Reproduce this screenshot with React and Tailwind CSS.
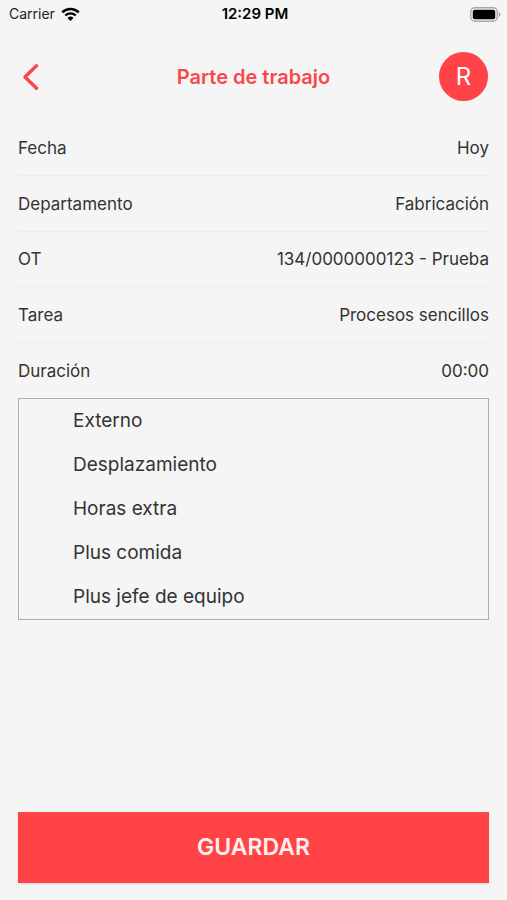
import { useState } from "react";

const fields = [
  { label: "Fecha", value: "Hoy" },
  { label: "Departamento", value: "Fabricación" },
  { label: "OT", value: "134/0000000123 - Prueba" },
  { label: "Tarea", value: "Procesos sencillos" },
  { label: "Duración", value: "00:00" },
];

const extras = [
  "Externo",
  "Desplazamiento",
  "Horas extra",
  "Plus comida",
  "Plus jefe de equipo",
];

const StatusBar = () => (
  <div className="grid h-7 grid-cols-3 items-center pl-[9px] pr-1.5 text-[#222222]">
    <div className="flex items-center gap-1.5">
      <span className="text-sm">Carrier</span>
      <svg width="19" height="15" viewBox="0 0 19 15" fill="none" aria-hidden="true">
        <path d="M1.3 5.3a11.6 11.6 0 0 1 16.4 0" stroke="#000" strokeWidth="2.5" />
        <path d="M4.3 8.5a7.4 7.4 0 0 1 10.4 0" stroke="#000" strokeWidth="2.3" />
        <path d="M9.5 14 6.5 11a4.3 4.3 0 0 1 6 0Z" fill="#000" />
      </svg>
    </div>
    <span className="text-center text-[15px] font-semibold text-black">
      12:29 PM
    </span>
    <svg
      className="justify-self-end"
      width="31"
      height="15"
      viewBox="0 0 31 15"
      fill="none"
      aria-hidden="true"
    >
      <rect x="0.8" y="0.8" width="26.4" height="13.4" rx="4" stroke="#a9a9a9" strokeWidth="1.4" />
      <rect x="2.8" y="2.8" width="22.4" height="9.4" rx="2" fill="#000" />
      <path d="M28.6 5v5c1.2-.4 1.9-1.4 1.9-2.5S29.8 5.4 28.6 5Z" fill="#a9a9a9" />
    </svg>
  </div>
);

const Header = () => (
  <header className="grid grid-cols-[50px_1fr_50px] items-center px-[18px] pt-6 pb-5">
    <button type="button" aria-label="Volver" className="flex h-12 items-center pl-1">
      <svg width="17" height="26" viewBox="0 0 17 26" fill="none" aria-hidden="true">
        <path
          d="M14.5 1.8 3 13l11.500 11.200"
          stroke="#ff4346"
          strokeWidth="3.4"
          strokeLinecap="round"
          strokeLinejoin="round"
        />
      </svg>
    </button>
    <h1 className="text-center text-xl font-semibold text-[#f9484c]">
      Parte de trabajo
    </h1>
    <button
      type="button"
      className="flex size-[49px] items-center justify-center rounded-full bg-[#ff4346] text-2xl text-white"
    >
      R
    </button>
  </header>
);

const App = () => {
  const [selected, setSelected] = useState([]);

  const toggle = (name) => {
    setSelected((prev) =>
      prev.includes(name) ? prev.filter((n) => n !== name) : [...prev, name]
    );
  };

  return (
    <div className="flex min-h-screen flex-col bg-[#f5f5f5] font-['Inter',sans-serif] text-[#333333]">
      <StatusBar />
      <Header />

      <main className="flex flex-1 flex-col px-[18px] pb-[17px]">
        {/* Work report fields */}
        <div className="grid h-[277px] grid-rows-5">
          {fields.map((field) => (
            <button
              key={field.label}
              type="button"
              className="flex items-center justify-between border-b border-[#ececec] pt-0.5 text-[17px] last:border-b-0"
            >
              <span>{field.label}</span>
              <span>{field.value}</span>
            </button>
          ))}
        </div>

        {/* Extras */}
        <div className="border border-[#adadad]">
          {extras.map((name) => (
            <label key={name} className="flex h-11 items-center text-[19px]">
              <span className="flex w-[54px] justify-center">
                <input
                  type="checkbox"
                  checked={selected.includes(name)}
                  onChange={() => toggle(name)}
                  className="size-5 appearance-none checked:bg-[#ff4346]"
                />
              </span>
              {name}
            </label>
          ))}
        </div>

        <button
          type="button"
          className="mt-auto h-[71px] bg-[#ff4346] text-[23px] font-semibold text-[#fff0f0] shadow-sm"
        >
          GUARDAR
        </button>
      </main>
    </div>
  );
};

export default App;
